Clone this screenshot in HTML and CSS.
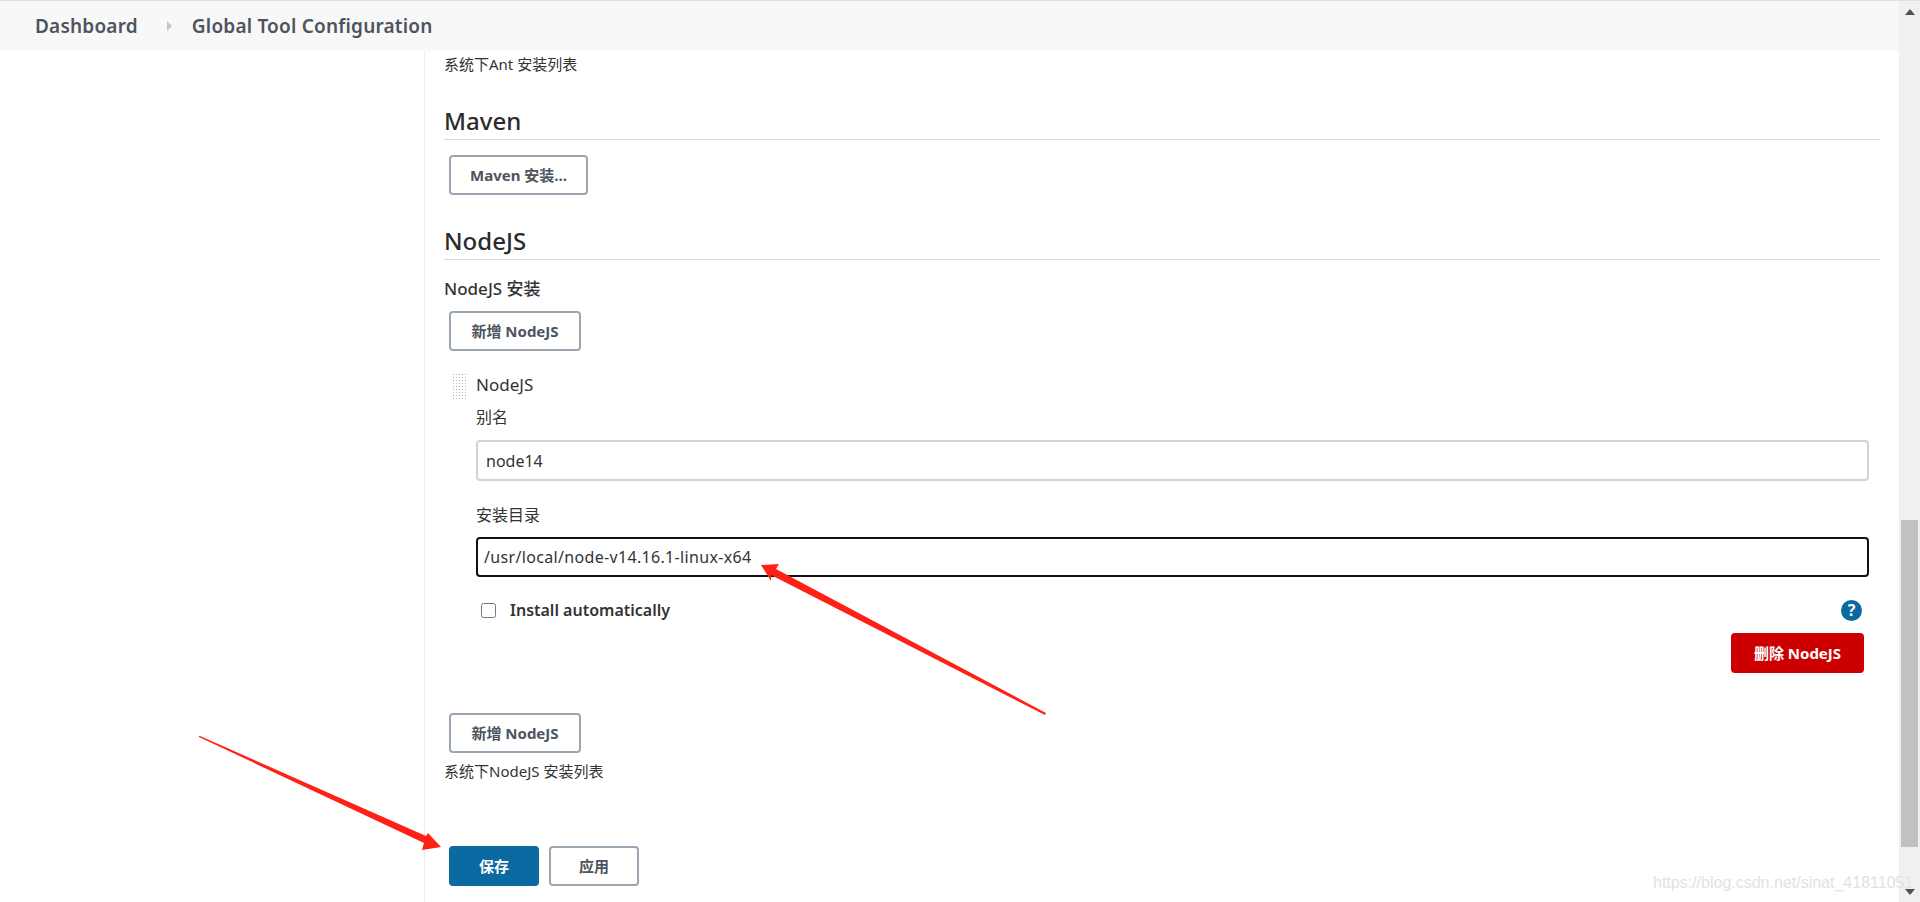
FILE: index.html
```html
<!DOCTYPE html>
<html>
<head>
    <title>Global Tool Configuration</title>
    <link rel="stylesheet" href="styles.css">
</head>
<body>
    <div class="page">
        <div class="content">
            <div class="breadcrumbs">
                <a class="crumb">Dashboard</a>
                <span class="crumb-sep"></span>
                <a class="crumb">Global Tool Configuration</a>
            </div>
            <div class="layout">
                <div class="side-panel"></div>
                <div class="main-panel">
                    <div class="help-line help-top">系统下Ant 安装列表</div>

                    <h2 class="section-title">Maven</h2>
                    <button class="btn btn-maven">Maven 安装...</button>

                    <h2 class="section-title section-node">NodeJS</h2>
                    <div class="field-title">NodeJS 安装</div>
                    <button class="btn btn-add btn-top">新增 NodeJS</button>

                    <div class="repeat-item">
                        <div class="item-head">
                            <span class="drag-handle"></span>
                            <span class="item-name">NodeJS</span>
                        </div>
                        <div class="item-body">
                            <div class="input-label first">别名</div>
                            <input class="text-input" type="text" value="node14">
                            <div class="input-label second">安装目录</div>
                            <input class="text-input focused" type="text" value="/usr/local/node-v14.16.1-linux-x64">
                            <div class="check-row">
                                <label class="check-label"><input type="checkbox">Install automatically</label>
                                <span class="help-icon">?</span>
                            </div>
                            <div class="delete-row">
                                <button class="btn btn-danger">删除 NodeJS</button>
                            </div>
                        </div>
                    </div>

                    <button class="btn btn-add btn-bottom">新增 NodeJS</button>
                    <div class="help-line help-bottom">系统下NodeJS 安装列表</div>

                    <div class="form-actions">
                        <button class="btn btn-primary">保存</button>
                        <button class="btn btn-apply">应用</button>
                    </div>
                </div>
            </div>
        </div>
        <div class="scrollbar">
            <span class="arrow-up"></span>
            <span class="thumb"></span>
            <span class="arrow-down"></span>
        </div>
    </div>

    <!-- annotation arrows drawn on top of the screenshot -->
    <svg class="annotations" width="1920" height="902" viewBox="0 0 1920 902">
        <polygon points="761,565 779,564 776,569 1046,713 1045,715 771,575 771,581" fill="#ff2116"/>
        <polygon points="199,736 200,736 426,836 428,833 441,847 422,850 424,843 199,737" fill="#ff2116"/>
    </svg>
    <div class="watermark">https://blog.csdn.net/sinat_41811051</div>
</body>
</html>
```

FILE: styles.css
```css
* {
    box-sizing: border-box;
}

html, body {
    margin: 0;
    padding: 0;
    height: 100%;
    overflow: hidden;
}

body {
    background: #fff;
    color: #333;
    font-family: "Noto Sans", "Noto Sans CJK SC", sans-serif;
    font-size: 16px;
}

.page {
    display: flex;
    height: 902px;
    border-top: 1px solid #dfe0e4;
}

.content {
    flex: 1;
    min-width: 0;
    display: flex;
    flex-direction: column;
}

/* Хлебные крошки */
.breadcrumbs {
    height: 50px;
    flex: none;
    display: flex;
    align-items: center;
    padding-left: 35px;
    background: #f8f8f8;
}

.crumb {
    font-size: 19px;
    font-weight: 600;
    letter-spacing: 0.2px;
    color: #4d545d;
}

.crumb-sep {
    width: 0;
    height: 0;
    margin: 0 20px 0 29px;
    border-left: 5px solid #c5c7cb;
    border-top: 5px solid transparent;
    border-bottom: 5px solid transparent;
}

.layout {
    flex: 1;
    display: flex;
}

.side-panel {
    width: 425px;
    flex: none;
    border-right: 1px solid #e9eef2;
}

.main-panel {
    flex: 1;
    padding: 0 19px;
}

.help-line {
    font-size: 15px;
    line-height: 28px;
    color: #333;
}

.help-top {
    margin-top: -1px;
}

.help-bottom {
    margin-top: 4px;
}

.section-title {
    margin: 25px 0 0;
    height: 37px;
    line-height: 36px;
    font-size: 24px;
    font-weight: 500;
    color: #2b2b2b;
    border-bottom: 1px solid #d9dbde;
}

.section-node {
    margin-top: 28px;
}

.field-title {
    margin-top: 17px;
    line-height: 24px;
    font-size: 17px;
    font-weight: 500;
}

.btn {
    display: block;
    height: 40px;
    padding: 0 0 2px;
    border: 2px solid #9aa6b2;
    border-radius: 4px;
    background: #fff;
    color: #4d545d;
    font-family: inherit;
    font-size: 15px;
    font-weight: 700;
}

.btn-maven {
    width: 139px;
    margin: 15px 0 0 5px;
}

.btn-add {
    width: 132px;
    margin-left: 5px;
}

.btn-top {
    margin-top: 10px;
}

.btn-bottom {
    margin-top: 40px;
}

.repeat-item {
    margin-top: 21px;
}

.item-head {
    display: flex;
    height: 24px;
    align-items: center;
}

.drag-handle {
    width: 15px;
    height: 26px;
    margin: 3px 9px 0 8px;
    background-image: radial-gradient(circle, #b0b0b0 1px, transparent 1px);
    background-size: 3px 3px;
}

.item-name {
    font-size: 17px;
}

.item-body {
    margin-left: 32px;
    margin-right: 11px;
}

.input-label {
    line-height: 24px;
    font-size: 16px;
}

.input-label.first {
    margin-top: 9px;
}

.input-label.second {
    margin-top: 22px;
}

.text-input {
    display: block;
    width: 100%;
    height: 41px;
    margin-top: 11px;
    padding: 0 8px;
    border: 2px solid #d3d3d3;
    border-radius: 4px;
    outline: none;
    background: #fff;
    color: #333;
    font-family: inherit;
    font-size: 16px;
}

.text-input.focused {
    height: 40px;
    margin-top: 10px;
    padding: 0 6px;
    border-color: #111;
    letter-spacing: 0.33px;
}

.check-row {
    display: flex;
    align-items: center;
    justify-content: space-between;
    height: 24px;
    margin-top: 21px;
    padding: 0 7px 0 5px;
}

.check-label {
    display: flex;
    align-items: center;
    font-size: 16px;
    font-weight: 600;
    color: #333;
}

.check-label input {
    width: 15px;
    height: 15px;
    margin: 0 14px 0 0;
}

.help-icon {
    width: 21px;
    height: 21px;
    border-radius: 50%;
    background: #0b6aa2;
    color: #fff;
    font-size: 16px;
    font-weight: 700;
    line-height: 21px;
    text-align: center;
}

.delete-row {
    display: flex;
    justify-content: flex-end;
    margin-top: 11px;
    padding-right: 5px;
}

.btn-danger {
    width: 133px;
    border: none;
    background: #c00;
    color: #fff;
}

.form-actions {
    display: flex;
    gap: 10px;
    margin: 61px 0 0 5px;
}

.btn-primary {
    width: 90px;
    border: none;
    background: #0b6aa2;
    color: #fff;
}

.btn-apply {
    width: 90px;
}

/* Полоса прокрутки */
.scrollbar {
    width: 21px;
    flex: none;
    display: flex;
    flex-direction: column;
    align-items: center;
    background: #f0f0f0;
}

.arrow-up, .arrow-down {
    width: 0;
    height: 0;
    border-left: 5px solid transparent;
    border-right: 5px solid transparent;
}

.arrow-up {
    margin-top: 8px;
    border-bottom: 6px solid #505050;
}

.thumb {
    width: 17px;
    height: 327px;
    margin-top: 505px;
    background: #c1c1c1;
}

.arrow-down {
    margin-top: 42px;
    border-top: 6px solid #505050;
}

.annotations {
    position: absolute;
    top: 0;
    left: 0;
    pointer-events: none;
}

.watermark {
    position: absolute;
    top: 871px;
    left: 1653px;
    font-family: "Liberation Sans", sans-serif;
    font-size: 16px;
    line-height: 24px;
    color: #e2e2e2;
    white-space: nowrap;
}
```
